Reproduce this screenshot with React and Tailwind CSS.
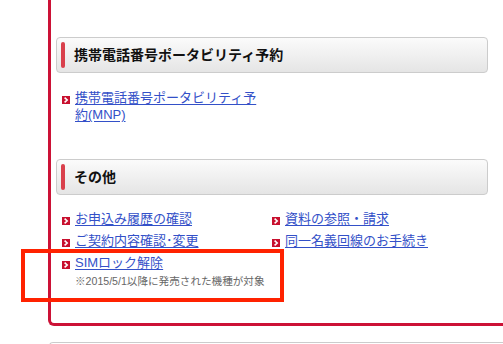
import React from 'react';

const FONT = { fontFamily: '"Liberation Sans", "Noto Sans CJK JP", sans-serif' };

function Arrow() {
  return (
    <svg viewBox="0 0 8 8" className="w-[8px] h-[8px] mt-[7px] shrink-0">
      <rect width="8" height="8" fill="#c8102e" />
      <polyline points="2.6,1.6 5.2,4 2.6,6.4" fill="none" stroke="#fff" strokeWidth="1.6" />
    </svg>
  );
}

function LinkItem({ children, textClass = '', note }) {
  return (
    <div className="flex items-start">
      <Arrow />
      <div className="ml-[5px]">
        <a href="#" className={`block text-[13px] leading-[17px] text-[#3350c8] underline underline-offset-[2px] ${textClass}`}>
          {children}
        </a>
        {note && <p className="mt-[3px] text-[10.6px] leading-[14px] text-[#666]">{note}</p>}
      </div>
    </div>
  );
}

function SectionHeader({ title }) {
  return (
    <div className="w-[432px] h-[36px] flex items-center border border-[#cccccc] rounded-[4px] bg-linear-to-b from-[#fbfbfb] to-[#e5e5e5]">
      <div className="ml-[4px] w-[4px] h-[26px] rounded-full bg-[#d9404c]" />
      <h2 className="ml-[9px] text-[14px] font-bold text-[#111] leading-none">{title}</h2>
    </div>
  );
}

export default function App() {
  return (
    <div className="relative w-[503px] h-[344px] overflow-hidden bg-white" style={FONT}>
      {/* red frame */}
      <div className="ml-[48px] w-[480px] border-l-[3px] border-b-[3px] border-[#cc1236] rounded-bl-[6px] pl-[5px] pt-[37px] pb-[35px]">
        <SectionHeader title="携帯電話番号ポータビリティ予約" />
        <div className="pl-[6px] mt-[16px]">
          <LinkItem textClass="w-[188px]">携帯電話番号ポータビリティ予約(MNP)</LinkItem>
        </div>

        <div className="mt-[36px]">
          <SectionHeader title="その他" />
        </div>
        <div className="pl-[6px] mt-[15px] grid grid-cols-[210px_1fr] gap-y-[5px]">
          <LinkItem>お申込み履歴の確認</LinkItem>
          <LinkItem>資料の参照・請求</LinkItem>
          <LinkItem>ご契約内容確認･変更</LinkItem>
          <LinkItem>同一名義回線のお手続き</LinkItem>
          <LinkItem note="※2015/5/1以降に発売された機種が対象">SIMロック解除</LinkItem>
        </div>
      </div>

      {/* next box */}
      <div className="ml-[49px] mt-[16px] h-[20px] border-t border-l border-[#cccccc] rounded-tl-[4px]" />

      {/* annotation highlight */}
      <div className="absolute left-[21px] top-[249px] w-[263px] h-[53px] border-[4px] border-[#ff2200]" />
    </div>
  );
}
